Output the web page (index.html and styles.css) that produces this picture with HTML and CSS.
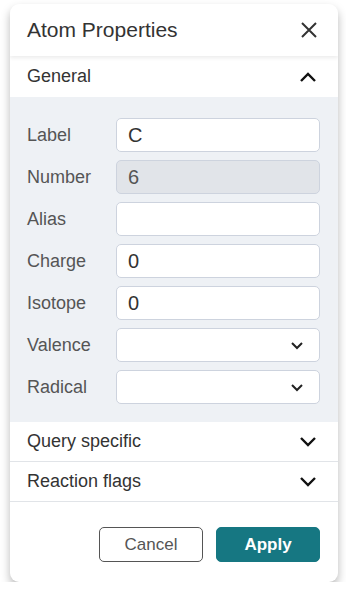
FILE: index.html
```html
<!DOCTYPE html>
<html>
<head>
  <title>Atom Properties</title>
  <link rel="stylesheet" href="styles.css">
</head>
<body>
  <div class="dialog">
    <div class="dialog-header">
      <span class="dialog-title">Atom Properties</span>
      <svg class="icon close" width="20" height="20" viewBox="0 0 20 20">
        <path d="M3 3 L17 17 M17 3 L3 17" stroke="#333" stroke-width="2" fill="none"/>
      </svg>
    </div>

    <div class="section open">
      <div class="section-header">
        <span>General</span>
        <svg class="icon" width="18" height="12" viewBox="0 0 18 12">
          <path d="M2 10 L9 3 L16 10" stroke="#111" stroke-width="2.4" fill="none"/>
        </svg>
      </div>
      <div class="section-body">
        <div class="field">
          <label>Label</label>
          <div class="input">C</div>
        </div>
        <div class="field">
          <label>Number</label>
          <div class="input disabled">6</div>
        </div>
        <div class="field">
          <label>Alias</label>
          <div class="input"></div>
        </div>
        <div class="field">
          <label>Charge</label>
          <div class="input">0</div>
        </div>
        <div class="field">
          <label>Isotope</label>
          <div class="input">0</div>
        </div>
        <div class="field">
          <label>Valence</label>
          <div class="input select">
            <svg width="14" height="9" viewBox="0 0 14 9"><path d="M2 2 L7 7 L12 2" stroke="#222" stroke-width="2" fill="none"/></svg>
          </div>
        </div>
        <div class="field">
          <label>Radical</label>
          <div class="input select">
            <svg width="14" height="9" viewBox="0 0 14 9"><path d="M2 2 L7 7 L12 2" stroke="#222" stroke-width="2" fill="none"/></svg>
          </div>
        </div>
      </div>
    </div>

    <div class="section">
      <div class="section-header">
        <span>Query specific</span>
        <svg class="icon" width="18" height="12" viewBox="0 0 18 12">
          <path d="M2 2 L9 9 L16 2" stroke="#111" stroke-width="2.4" fill="none"/>
        </svg>
      </div>
    </div>

    <div class="section">
      <div class="section-header">
        <span>Reaction flags</span>
        <svg class="icon" width="18" height="12" viewBox="0 0 18 12">
          <path d="M2 2 L9 9 L16 2" stroke="#111" stroke-width="2.4" fill="none"/>
        </svg>
      </div>
    </div>

    <div class="dialog-footer">
      <button class="btn cancel">Cancel</button>
      <button class="btn apply">Apply</button>
    </div>
  </div>
</body>
</html>
```

FILE: styles.css
```css
body {
  margin: 0;
  padding: 4px 8px 0 10px;
  background: #fff;
  font-family: 'Liberation Sans', Arial, sans-serif;
  color: #333;
}

.dialog {
  width: 328px;
  background: #fff;
  border-radius: 9px;
  box-shadow: 0 5px 10px rgba(0, 0, 0, 0.28);
  overflow: hidden;
}

.dialog-header {
  height: 52px;
  display: flex;
  align-items: center;
  justify-content: space-between;
  padding: 0 19px 0 17px;
  position: relative;
  z-index: 1;
  box-shadow: 0 2px 4px rgba(0, 0, 0, 0.08);
}

.dialog-title {
  font-size: 21px;
}

.section-header {
  height: 39px;
  display: flex;
  align-items: center;
  justify-content: space-between;
  padding: 0 21px 0 17px;
  font-size: 18px;
  border-bottom: 1px solid #e1e4e8;
}

.open .section-header {
  height: 41px;
  border-bottom: none;
}

.section-body {
  background: #eef1f5;
  padding: 21px 18px 18px 17px;
  display: flex;
  flex-direction: column;
  gap: 8px;
}

.field {
  display: flex;
  align-items: center;
}

.field label {
  width: 89px;
  font-size: 18px;
  color: #555;
}

.input {
  flex: 1;
  height: 34px;
  box-sizing: border-box;
  background: #fff;
  border: 1px solid #cdd3de;
  border-radius: 5px;
  padding: 0 11px;
  font-size: 20px;
  display: flex;
  align-items: center;
  color: #333;
}

.input.disabled {
  background: #e1e4e9;
  color: #555;
}

.select {
  justify-content: flex-end;
  padding-right: 15px;
}

.dialog-footer {
  display: flex;
  justify-content: flex-end;
  gap: 13px;
  padding: 25px 18px 20px 0;
}

.btn {
  width: 104px;
  height: 35px;
  border-radius: 5px;
  font-family: inherit;
  font-size: 17px;
}

.cancel {
  background: #fff;
  border: 1px solid #555;
  color: #555;
}

.apply {
  background: #167782;
  border: 1px solid #167782;
  color: #fff;
  font-weight: bold;
}
```
